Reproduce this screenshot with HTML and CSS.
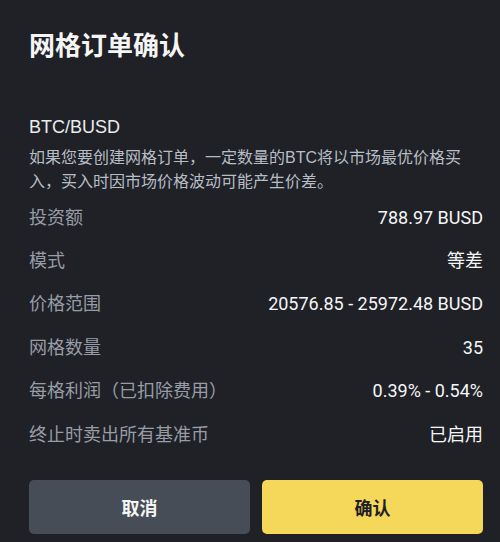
FILE: index.html
```html
<!DOCTYPE html>
<html lang="zh-CN">
<head>
  <meta charset="UTF-8">
  <meta name="viewport" content="width=device-width, initial-scale=1.0">
  <title>网格订单确认</title>
  <link rel="stylesheet" href="styles.css">
</head>
<body>
  <div class="dialog">
    <h1 class="title">网格订单确认</h1>
    <div class="pair">BTC/BUSD</div>
    <p class="desc">如果您要创建网格订单，一定数量的BTC将以市场最优价格买入，买入时因市场价格波动可能产生价差。</p>
    <div class="rows">
      <div class="row"><span class="label">投资额</span><span class="value">788.97 BUSD</span></div>
      <div class="row"><span class="label">模式</span><span class="value">等差</span></div>
      <div class="row"><span class="label">价格范围</span><span class="value">20576.85 - 25972.48 BUSD</span></div>
      <div class="row"><span class="label">网格数量</span><span class="value">35</span></div>
      <div class="row"><span class="label">每格利润（已扣除费用）</span><span class="value">0.39% - 0.54%</span></div>
      <div class="row"><span class="label">终止时卖出所有基准币</span><span class="value">已启用</span></div>
    </div>
    <div class="actions">
      <button class="btn btn-cancel">取消</button>
      <button class="btn btn-confirm">确认</button>
    </div>
  </div>
</body>
</html>
```

FILE: styles.css
```css
body {
  margin: 0;
  background-color: #1f2126;
  color: #eaecef;
  font-family: Roboto, "Noto Sans CJK SC", sans-serif;
  height: 542px;
  overflow: hidden;
}
.dialog {
  padding: 27px 17px 0 29px;
}
.title {
  margin: 0;
  font-size: 26px;
  line-height: 38px;
  font-weight: bold;
  color: #f5f5f5;
}
.pair {
  margin-top: 50px;
  font-family: "Liberation Sans", "Noto Sans CJK SC", sans-serif;
  font-size: 18px;
  line-height: 24px;
  color: #eaecef;
}
.desc {
  margin: 7px 0 0;
  font-family: "Liberation Sans", "Noto Sans CJK SC", sans-serif;
  font-size: 16px;
  line-height: 24px;
  color: #b7bdc6;
}
.rows {
  margin-top: 2px;
}
.row {
  display: flex;
  justify-content: space-between;
  align-items: center;
  height: 43.4px;
}
.label {
  font-size: 18px;
  line-height: 24px;
  color: #979ca6;
}
.value {
  font-size: 18px;
  line-height: 24px;
  font-weight: 400;
  color: #f5f6f7;
}
.actions {
  display: flex;
  gap: 12px;
  margin-top: 24px;
}
.btn {
  flex: 1;
  height: 54px;
  border: none;
  border-radius: 5px;
  font-family: "Noto Sans CJK SC", sans-serif;
  font-size: 18px;
  font-weight: bold;
  cursor: pointer;
}
.btn-cancel {
  background-color: #474d57;
  color: #f5f5f5;
}
.btn-confirm {
  background-color: #f5d75a;
  color: #1e2026;
}
```
